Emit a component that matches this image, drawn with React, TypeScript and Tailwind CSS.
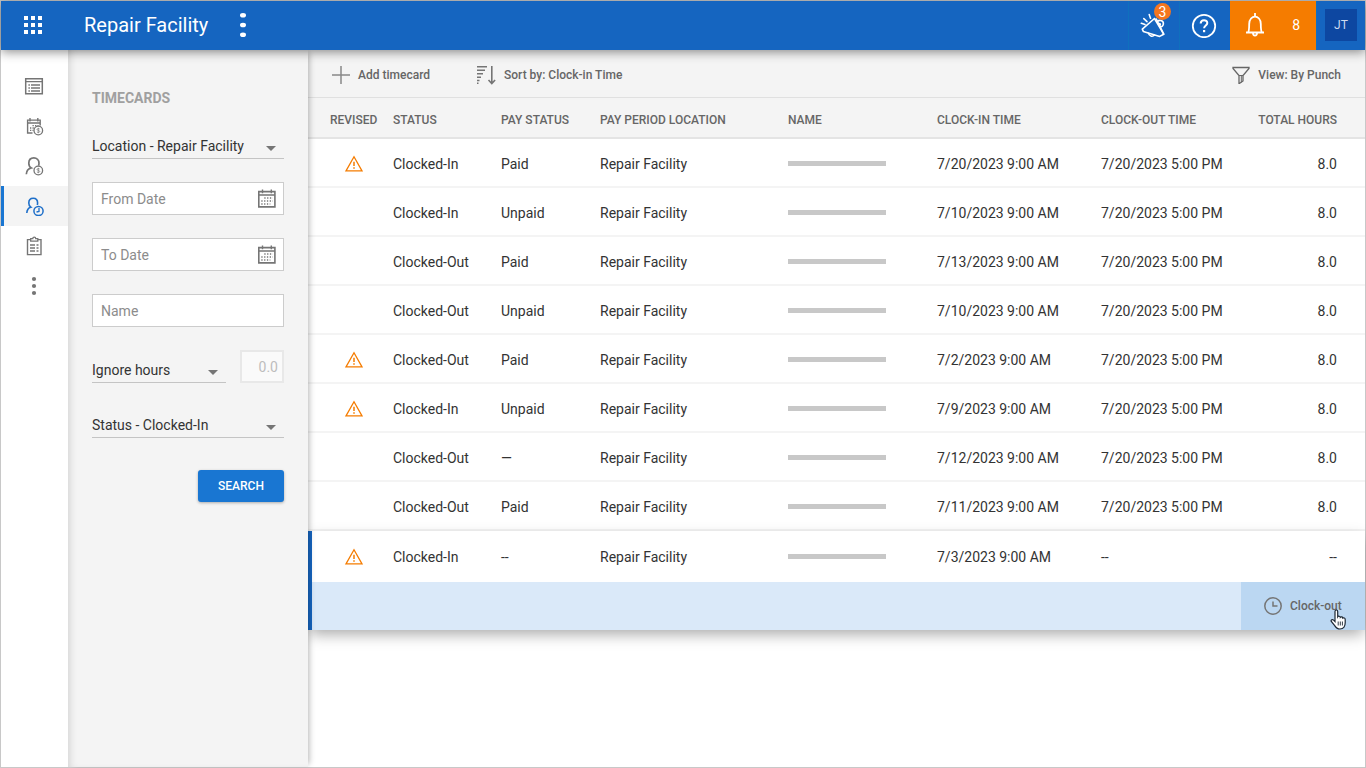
import React from 'react';

interface Timecard {
  revised: boolean;
  status: string;
  payStatus: string;
  location: string;
  clockIn: string;
  clockOut: string;
  hours: string;
}

const timecards: Timecard[] = [
  { revised: true, status: 'Clocked-In', payStatus: 'Paid', location: 'Repair Facility', clockIn: '7/20/2023 9:00 AM', clockOut: '7/20/2023 5:00 PM', hours: '8.0' },
  { revised: false, status: 'Clocked-In', payStatus: 'Unpaid', location: 'Repair Facility', clockIn: '7/10/2023 9:00 AM', clockOut: '7/20/2023 5:00 PM', hours: '8.0' },
  { revised: false, status: 'Clocked-Out', payStatus: 'Paid', location: 'Repair Facility', clockIn: '7/13/2023 9:00 AM', clockOut: '7/20/2023 5:00 PM', hours: '8.0' },
  { revised: false, status: 'Clocked-Out', payStatus: 'Unpaid', location: 'Repair Facility', clockIn: '7/10/2023 9:00 AM', clockOut: '7/20/2023 5:00 PM', hours: '8.0' },
  { revised: true, status: 'Clocked-Out', payStatus: 'Paid', location: 'Repair Facility', clockIn: '7/2/2023 9:00 AM', clockOut: '7/20/2023 5:00 PM', hours: '8.0' },
  { revised: true, status: 'Clocked-In', payStatus: 'Unpaid', location: 'Repair Facility', clockIn: '7/9/2023 9:00 AM', clockOut: '7/20/2023 5:00 PM', hours: '8.0' },
  { revised: false, status: 'Clocked-Out', payStatus: '—', location: 'Repair Facility', clockIn: '7/12/2023 9:00 AM', clockOut: '7/20/2023 5:00 PM', hours: '8.0' },
  { revised: false, status: 'Clocked-Out', payStatus: 'Paid', location: 'Repair Facility', clockIn: '7/11/2023 9:00 AM', clockOut: '7/20/2023 5:00 PM', hours: '8.0' },
];

const selected: Timecard = {
  revised: true,
  status: 'Clocked-In',
  payStatus: '--',
  location: 'Repair Facility',
  clockIn: '7/3/2023 9:00 AM',
  clockOut: '--',
  hours: '--',
};

interface IconProps {
  size?: number;
  className?: string;
  children: React.ReactNode;
}

const Icon: React.FC<IconProps> = ({ size = 20, className, children }) => (
  <svg
    width={size}
    height={size}
    viewBox={`0 0 ${size} ${size}`}
    fill="none"
    stroke="currentColor"
    strokeWidth="1.3"
    className={className}
    aria-hidden="true"
  >
    {children}
  </svg>
);

const ListIcon = () => (
  <Icon>
    <path d="M1.7 2.7h16.6v15.100H1.700z" strokeWidth="1.500" />
    <path d="M1.600 5.600h16.800M7 9h9M7 12h9M7 15h9" strokeWidth="1.400" />
    <path d="M4.400 9h1.500M4.400 12h1.500M4.400 15h1.500" strokeWidth="1.400" />
  </Icon>
);

// small dollar coin used in the corner of two icons
const Coin = () => (
  <>
    <circle cx="14.300" cy="14.500" r="4.300" strokeWidth="1.300" />
    <path d="M15.700 13.100c-.3-.6-2.600-.8-2.700.4 0 1.200 2.800.7 2.800 2 0 1.100-2.500 1.200-2.900.2M14.300 11.800v5.400" strokeWidth=".7" />
  </>
);

const CalendarPayIcon = () => (
  <Icon>
    <path d="M8.500 17H3.600V4.100h12.600v5.400M3.600 7h12.600M6 2v3.400M13.800 2v3.400" strokeWidth="1.400" />
    <path d="M8.500 9.600h6M6 12h4.500M6 14.400h3.500" strokeDasharray="1.300 1.200" />
    <Coin />
  </Icon>
);

const PersonPayIcon = () => (
  <Icon>
    <path d="M2.300 18.300c.2-3.600 2.300-5.800 5-6.400C5.500 10.900 4.800 9.100 4.800 7.200c0-3.200 2-5.400 5-5.400s5.200 2.200 5.200 5.400c0 .9-.2 1.700-.5 2.500" strokeWidth="1.700" />
    <Coin />
  </Icon>
);

const PersonClockIcon = () => (
  <Icon>
    <path d="M2.800 17c.2-3.400 1.700-5.200 4-5.800C5.300 10.200 4.800 8.800 4.800 7c0-2.800 1.700-4.700 4.400-4.700s4.400 1.900 4.400 4.700c0 .7-.1 1.300-.3 1.900" strokeWidth="1.600" />
    <circle cx="14.500" cy="15" r="4.600" strokeWidth="1.500" />
    <path d="M15 12v3.400l-2.500.6" strokeWidth="1.300" />
  </Icon>
);

const ClipboardIcon = () => (
  <Icon>
    <path d="M6.500 3.600H3.500v15h13.500v-15h-3" strokeWidth="1.400" />
    <path d="M6.700 2.700h2.100c0-2 2.900-2 2.900 0h2.100v2.500H6.700z" />
    <path d="M6 9h5M6 12h5M6 15h5M12.500 9h2M12.500 12h2M12.500 15h2" strokeWidth="1.400" />
  </Icon>
);

const MoreIcon = () => (
  <Icon>
    <g fill="currentColor" stroke="none">
      <circle cx="10" cy="3" r="2.100" />
      <circle cx="10" cy="10" r="2.100" />
      <circle cx="10" cy="17" r="2.100" />
    </g>
  </Icon>
);

const CalendarIcon = () => (
  <Icon>
    <path d="M1.800 2.600h16.100v15.300H1.800z" strokeWidth="1.600" />
    <path d="M1.800 6h16M5.500.6v3.600M14.300.6v3.600" strokeWidth="1.400" />
    <path d="M7.300 9h8.500M4.300 12.100h11.500M4.300 15.100h9" strokeDasharray="1.300 1.500" strokeWidth="1.500" />
  </Icon>
);

const WarningIcon = () => (
  <Icon className="mx-auto text-[#f57c00]">
    <path d="M10 2.700 18 16.900H2z" strokeLinejoin="miter" />
    <path d="M10 7.800v4.200M10 13.300v1.500" strokeWidth="1.500" />
  </Icon>
);

interface SelectProps {
  label: string;
  value: string;
  className: string;
}

const Select: React.FC<SelectProps> = ({ label, value, className }) => (
  <div className={`relative ${className}`}>
    <select
      aria-label={label}
      className="block h-[25px] w-full appearance-none border-b border-[#c4c4c4] bg-transparent text-sm text-[#333] outline-none"
    >
      <option>{value}</option>
    </select>
    <svg width="10" height="5" viewBox="0 0 10 5" className="pointer-events-none absolute right-2 bottom-2" aria-hidden="true">
      <path d="M0 0h10L5 5z" fill="#757575" />
    </svg>
  </div>
);

const DateField: React.FC<{ label: string }> = ({ label }) => (
  <div className="flex h-[33px] items-center border border-[#ccc] bg-white pr-1.5 pl-2">
    <input
      type="text"
      aria-label={label}
      placeholder={label}
      className="min-w-0 flex-1 text-sm outline-none placeholder:text-[#8c8c8c]"
    />
    <button type="button" aria-label={`Choose ${label}`} className="text-[#757575]">
      <CalendarIcon />
    </button>
  </div>
);

const Header = () => (
  <header className="relative z-30 flex h-[49px] items-center bg-[#1565c0] text-white shadow-[0_2px_10px_rgba(0,0,0,0.45)]">
    <button type="button" aria-label="Apps" className="ml-[22px] pb-0.5">
      <Icon>
        <g fill="currentColor" stroke="none">
          <path d="M1 1h4v4H1zM8 1h4v4H8zM15 1h4v4h-4zM1 8h4v4H1zM8 8h4v4H8zM15 8h4v4h-4zM1 15h4v4H1zM8 15h4v4H8zM15 15h4v4h-4z" />
        </g>
      </Icon>
    </button>
    <h1 className="ml-[41px] pb-0.5 text-xl">Repair Facility</h1>
    <button type="button" aria-label="Facility menu" className="ml-[21px] pb-0.5">
      <Icon size={28}>
        <g fill="currentColor" stroke="none">
          <ellipse cx="14" cy="4.200" rx="3" ry="2.300" />
          <ellipse cx="14" cy="14" rx="3" ry="2.300" />
          <ellipse cx="14" cy="23.800" rx="3" ry="2.300" />
        </g>
      </Icon>
    </button>
    <div className="ml-auto flex h-full">
      <button type="button" aria-label="Announcements" className="relative flex w-[51px] items-center justify-center border-l border-[#0f70bd]">
        <Icon size={28}>
          <g strokeWidth="1.600" strokeLinecap="round" strokeLinejoin="round">
            <path d="M14.500 6.500 2.300 17.200l1 2.200 16.400 5 4-2.200z" />
            <path d="M8.500 21.200c.5 3 4 4 6 1.800M16.300 7l7.400 15.200" />
            <path d="M17.500 9.500c2.500-2.500 6.500-.5 5.800 2.800-.3 1.500-1.600 2.500-3 2.500M18.800 11.800c1-.7 2 .3 1.300 1.300" />
            <path d="M1.300 11.300l3.700 1.300M3.800 6.600l3.200 3M9.200 2.600l1.300 3.700" />
          </g>
        </Icon>
        <span className="absolute top-0.5 right-2 flex size-[17px] items-center justify-center rounded-full bg-[#f5761e] text-sm">3</span>
      </button>
      <button type="button" aria-label="Help" className="flex w-[51px] items-center justify-center border-l border-[#0f70bd] pr-0.5 pb-0.5">
        <Icon size={26}>
          <circle cx="13" cy="14" r="11.200" strokeWidth="1.800" />
          <path d="M9.700 11.500c0-4.500 6.600-4.300 6.600-.5 0 2.500-3.200 2.500-3.200 5.300" strokeWidth="2" />
          <path d="M13.100 18v2.200" strokeWidth="2.200" />
        </Icon>
      </button>
      <button type="button" aria-label="Notifications" className="flex w-[86px] items-center justify-between bg-[#f57c00] pr-4 pb-0.5 pl-3 text-sm">
        <Icon size={26}>
          <path d="M4 20.500h18M6 20.500c1.200-1.200 1.200-2.500 1.200-8.500 0-9.800 11.600-9.800 11.600 0 0 6 0 7.300 1.200 8.500" strokeWidth="1.800" />
          <path d="M11 21c0 3.400 4 3.400 4 0M13 1v3.500" strokeWidth="1.800" />
        </Icon>
        <span>8</span>
      </button>
      <div className="flex w-[49px] items-center justify-center border-l border-[#0f70bd] pb-0.5">
        <button type="button" className="size-8 bg-[#0d47a1] text-xs text-[#cfdcf0]">JT</button>
      </div>
    </div>
  </header>
);

const navItems = [
  { label: 'Schedule', icon: <ListIcon /> },
  { label: 'Pay periods', icon: <CalendarPayIcon /> },
  { label: 'Employee pay', icon: <PersonPayIcon /> },
  { label: 'Timecards', icon: <PersonClockIcon />, active: true },
  { label: 'Reports', icon: <ClipboardIcon /> },
  { label: 'More', icon: <MoreIcon /> },
];

const Sidebar = () => (
  <nav className="w-[67px] shrink-0 bg-white pt-4">
    {navItems.map((item) => (
      <a
        key={item.label}
        href="#"
        aria-label={item.label}
        className={
          item.active
            ? 'flex h-10 items-center border-l-3 border-[#1976d2] bg-[#f4f4f4] pl-5 text-[#1e6fc9]'
            : 'flex h-10 items-center pl-[23px] text-[#757575]'
        }
      >
        {item.icon}
      </a>
    ))}
  </nav>
);

const FilterPanel = () => (
  <form
    className="relative z-10 flex w-60 shrink-0 flex-col gap-[23px] bg-[#f4f4f4] px-6 pt-9 shadow-[inset_6px_0_8px_-5px_rgba(0,0,0,0.16),4px_0_6px_-3px_rgba(0,0,0,0.3)]"
    onSubmit={(e) => e.preventDefault()}
  >
    <h2 className="text-sm leading-[25px] font-bold text-[#a0a0a0]">TIMECARDS</h2>
    <Select label="Location" value="Location - Repair Facility" className="w-full" />
    <DateField label="From Date" />
    <DateField label="To Date" />
    <input
      type="text"
      aria-label="Name"
      placeholder="Name"
      className="h-[33px] border border-[#ccc] bg-white px-2 text-sm outline-none placeholder:text-[#8c8c8c]"
    />
    <div className="flex items-end gap-[14px]">
      <Select label="Hours filter" value="Ignore hours" className="flex-1" />
      <input
        type="text"
        aria-label="Hours"
        placeholder="0.0"
        disabled
        className="h-[33px] w-11 border-2 border-[#e8e8e8] bg-[#fafafa] pr-1 text-right text-sm placeholder:text-[#bdbdbd]"
      />
    </div>
    <Select label="Status" value="Status - Clocked-In" className="mt-[7px] w-full" />
    <button
      type="submit"
      className="mt-[9px] h-8 w-[86px] self-end rounded-[3px] bg-[#1976d2] text-xs font-medium text-white shadow-[0_1px_3px_rgba(0,0,0,0.3)]"
    >
      SEARCH
    </button>
  </form>
);

const Toolbar = () => (
  <div className="flex h-12 items-center border-b border-[#e0e0e0] bg-[#f4f4f4] px-6 pt-0.5 text-xs font-medium text-[#666]">
    <button type="button" className="flex items-center gap-2">
      <Icon size={18} className="text-[#888]">
        <path d="M9 0v18M0 9h18" strokeWidth="1.500" />
      </Icon>
      Add timecard
    </button>
    <button type="button" className="ml-[46px] flex items-center gap-2">
      <Icon className="text-[#757575]">
        <path d="M1 1.700h10M1 5.200h8M1 8.700h6M1 12.200h4M1 15.500h2.500M1 18.200h1.500" strokeWidth="1.400" />
        <path d="M15.800 1v17M12.500 15l3.300 3.500 3.300-3.500" strokeWidth="1.600" />
      </Icon>
      Sort by: Clock-in Time
    </button>
    <button type="button" className="ml-auto flex items-center gap-2">
      <Icon size={18}>
        <path d="M1 1.500h16v1L11 9.500v5.500l-4 2.700V9.500L1 2.500z" />
        <path d="M7 9.500h4M9.300 10v6.500" strokeWidth="1" />
      </Icon>
      View: By Punch
    </button>
  </div>
);

const RowCells: React.FC<{ card: Timecard; cell: string; first: string }> = ({ card, cell, first }) => (
  <>
    <td className={`${cell} ${first}`}>{card.revised && <WarningIcon />}</td>
    <td className={cell}>{card.status}</td>
    <td className={cell}>{card.payStatus}</td>
    <td className={cell}>{card.location}</td>
    <td className={cell}>
      <div className="h-[5px] w-[98px] bg-[#c8c8c8]" />
    </td>
    <td className={cell}>{card.clockIn}</td>
    <td className={cell}>{card.clockOut}</td>
    <td className={`${cell} pr-7 text-right`}>{card.hours}</td>
  </>
);

const TimecardTable = () => (
  <table className="w-full table-fixed border-separate border-spacing-0 text-left text-sm text-[#333]">
    <colgroup>
      <col className="w-[85px]" />
      <col className="w-[108px]" />
      <col className="w-[99px]" />
      <col className="w-[188px]" />
      <col className="w-[149px]" />
      <col className="w-[164px]" />
      <col className="w-[130px]" />
      <col className="w-[134px]" />
    </colgroup>
    <thead className="bg-[#f4f4f4] text-xs text-[#666]">
      <tr className="h-[41px]">
        <th className="border-b-2 border-[#e4e4e4] pt-1 pl-[22px] font-medium">REVISED</th>
        <th className="border-b-2 border-[#e4e4e4] pt-1 font-medium">STATUS</th>
        <th className="border-b-2 border-[#e4e4e4] pt-1 font-medium">PAY STATUS</th>
        <th className="border-b-2 border-[#e4e4e4] pt-1 font-medium">PAY PERIOD LOCATION</th>
        <th className="border-b-2 border-[#e4e4e4] pt-1 font-medium">NAME</th>
        <th className="border-b-2 border-[#e4e4e4] pt-1 font-medium">CLOCK-IN TIME</th>
        <th className="border-b-2 border-[#e4e4e4] pt-1 font-medium">CLOCK-OUT TIME</th>
        <th className="border-b-2 border-[#e4e4e4] pt-1 pr-7 text-right font-medium">TOTAL HOURS</th>
      </tr>
    </thead>
    <tbody>
      {timecards.map((card, i) => (
        <tr key={i} className="h-[49px]">
          <RowCells card={card} cell="border-b-2 border-[#f4f4f4] pt-0.5" first="pl-[7px]" />
        </tr>
      ))}
    </tbody>
    <tbody className="relative z-0 shadow-[0_6px_14px_-2px_rgba(0,0,0,0.35)]">
      <tr className="h-[51px]">
        <RowCells card={selected} cell="bg-white" first="border-l-4 border-[#1565c0] pl-[3px]" />
      </tr>
      <tr className="h-12">
        <td colSpan={8} className="border-l-4 border-[#1565c0] bg-[#dae9f9] p-0">
          <button
            type="button"
            className="relative ml-auto flex h-12 w-[124px] items-center gap-2 bg-[#bbd7f2] pl-[23px] text-xs font-medium text-[#666]"
          >
            <Icon size={18} className="text-[#757575]">
              <circle cx="9" cy="9" r="8.200" strokeWidth="1.500" />
              <path d="M9 4.500V9h4.500" strokeWidth="1.500" />
            </Icon>
            Clock-out
            <svg width="18" height="22" viewBox="0 0 18 22" className="absolute top-[27px] right-[17px]" aria-hidden="true">
              <path
                d="M5 2.500c0-2 2.700-2 2.700 0v5.300c.6-1 2.500-.7 2.600.5.700-.8 2.400-.5 2.500.8.900-.6 2.400-.2 2.400 1.300v3.400c0 3.300-1.500 6.200-5.200 6.200-3.200 0-4.300-1.600-5.300-3.400L1.300 12.500c-.8-1.500 1.200-2.700 2.300-1.400L5 12.600z"
                fill="#fff"
                stroke="#1c2733"
                strokeWidth="1.200"
              />
              <path d="M8.200 12.500v4M10.300 12.500v4M12.400 12.500v4" stroke="#1c2733" strokeWidth=".9" />
            </svg>
          </button>
        </td>
      </tr>
    </tbody>
  </table>
);

const App: React.FC = () => (
  <div className="flex min-h-screen flex-col border border-[#c8c8c8] bg-white font-[Roboto,sans-serif]">
    <Header />
    <div className="flex flex-1">
      <Sidebar />
      <FilterPanel />
      <main className="min-w-0 flex-1">
        <Toolbar />
        <TimecardTable />
      </main>
    </div>
  </div>
);

export default App;
